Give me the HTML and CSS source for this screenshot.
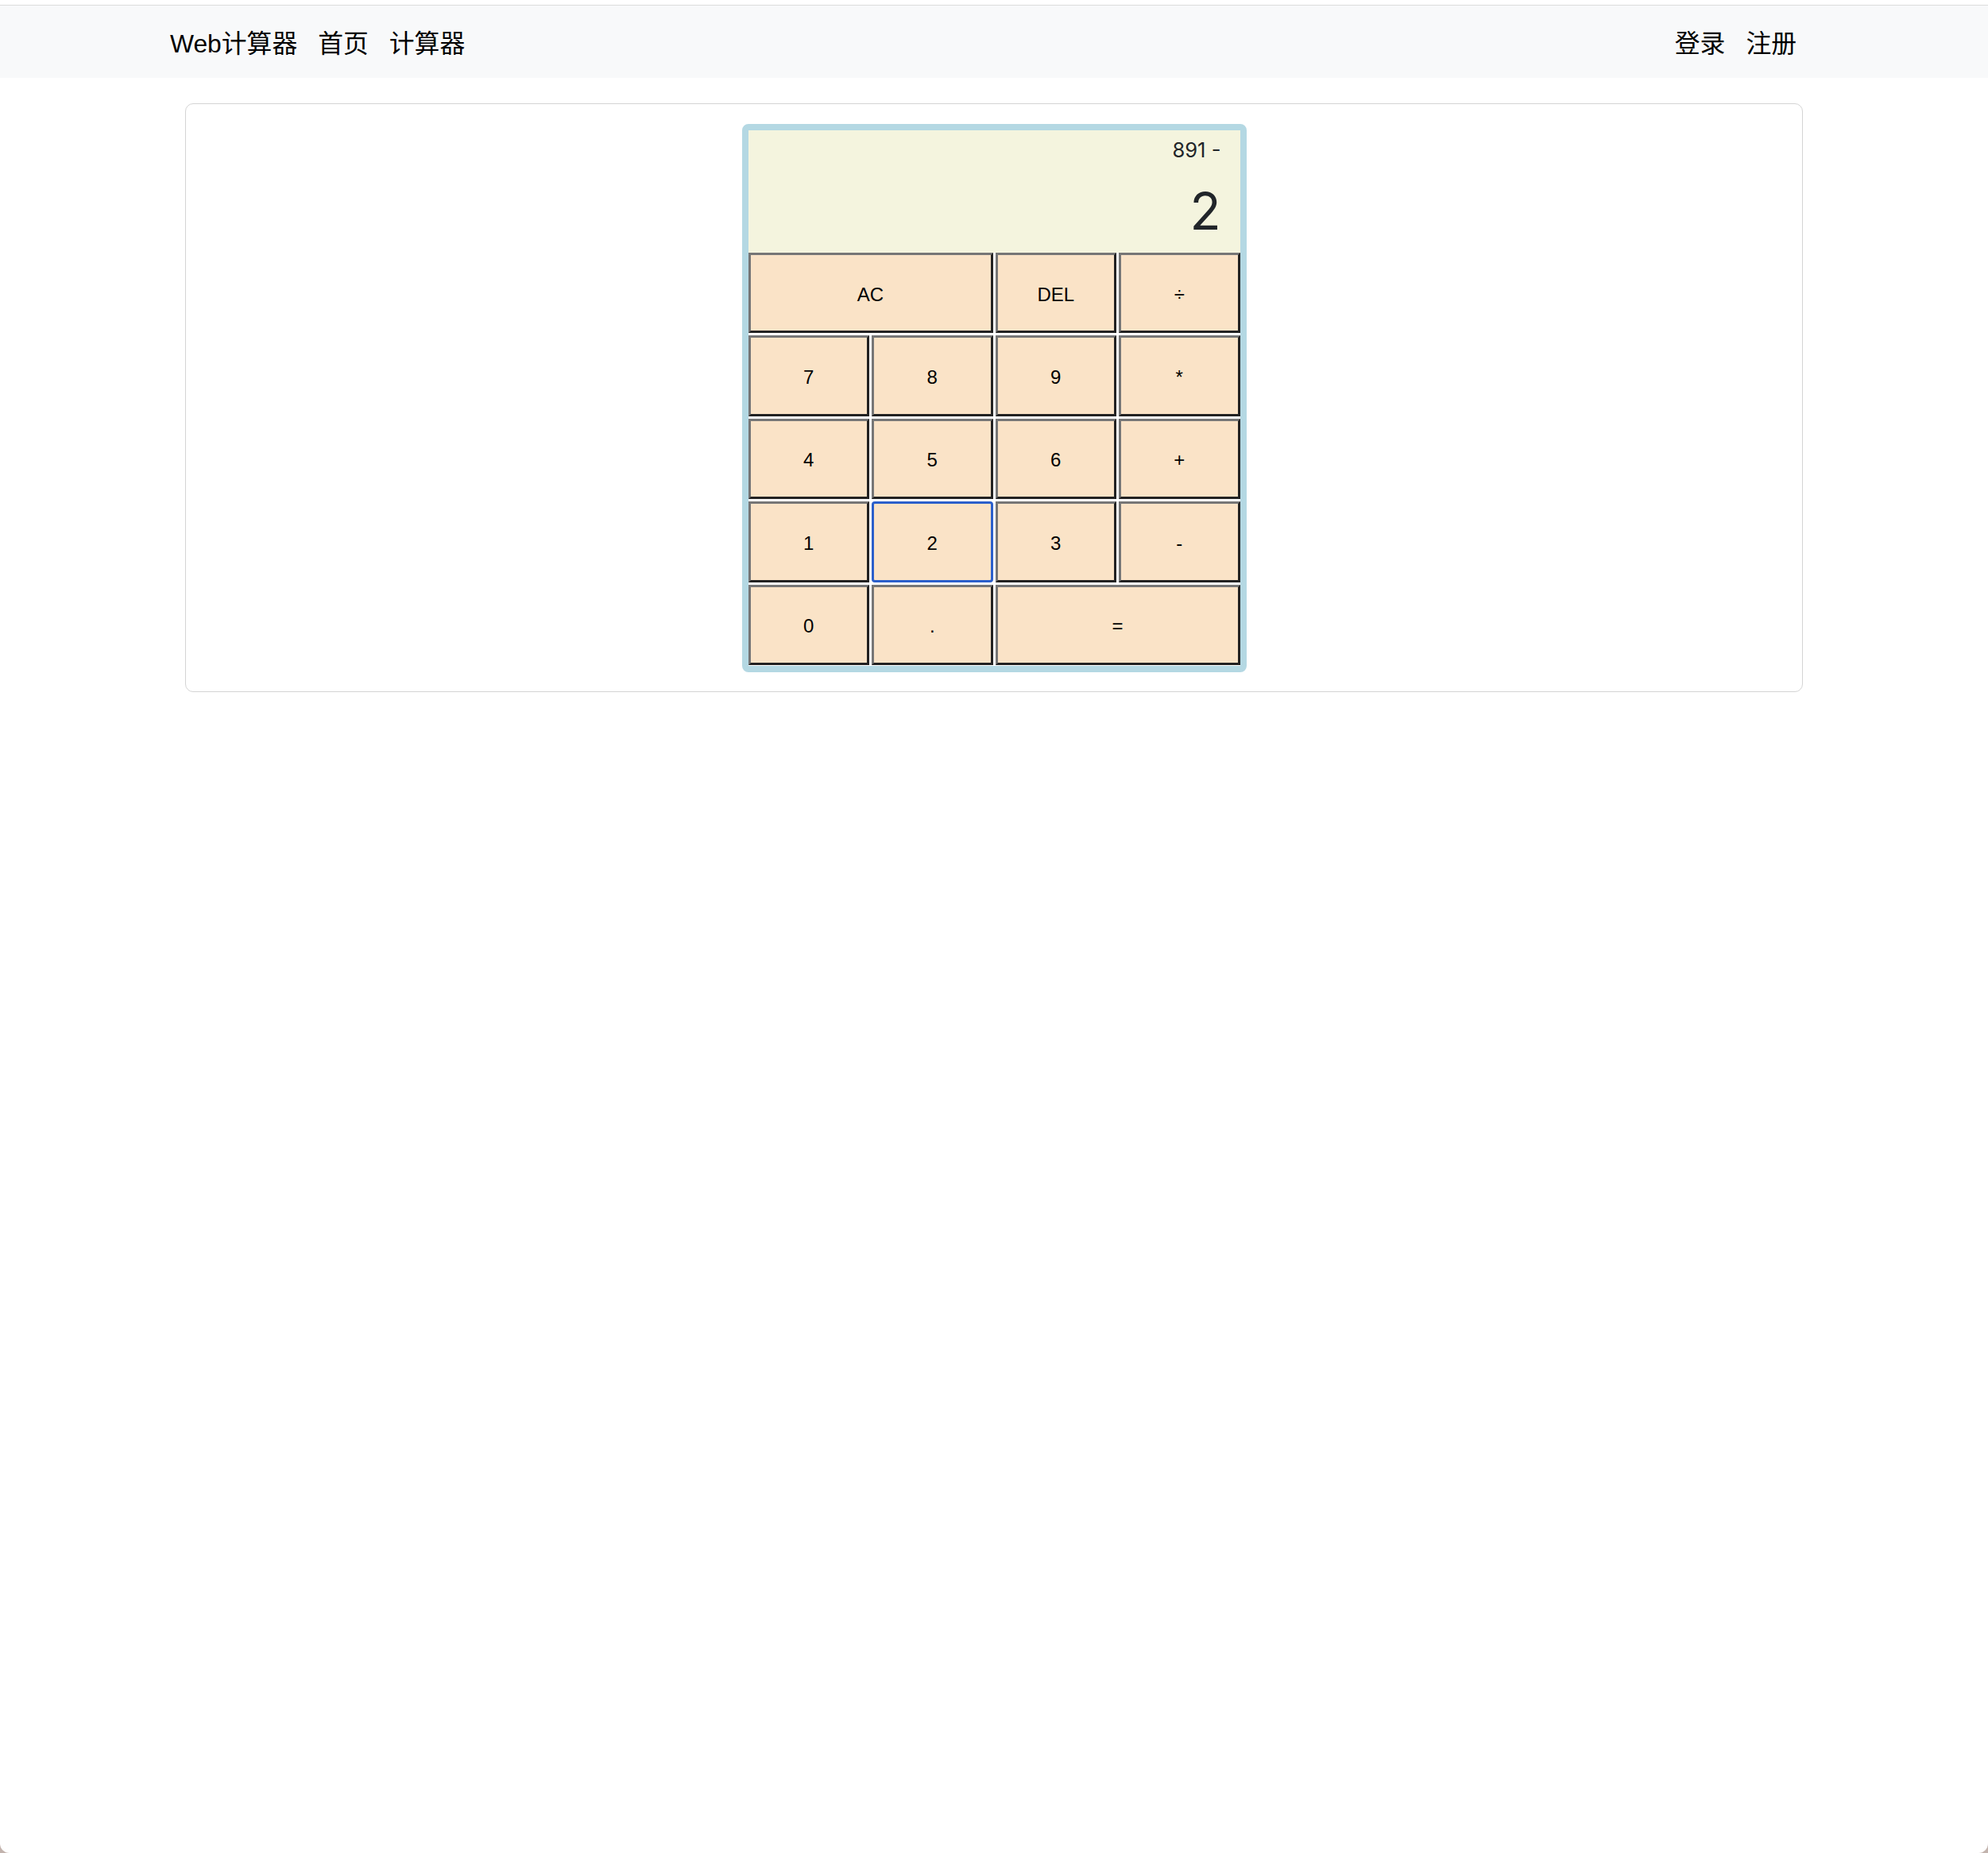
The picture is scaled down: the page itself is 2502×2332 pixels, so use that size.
FILE: index.html
```html
<!DOCTYPE html>
<html lang="zh">
<head>
<meta charset="utf-8">
<title>Web计算器</title>
<link rel="stylesheet" href="styles.css">
</head>
<body>
<div class="window">
  <header class="navbar">
    <nav class="nav-group">
      <a class="brand">Web计算器</a>
      <a class="nav-link">首页</a>
      <a class="nav-link">计算器</a>
    </nav>
    <nav class="nav-group">
      <a class="nav-link">登录</a>
      <a class="nav-link">注册</a>
    </nav>
  </header>
  <main class="main">
    <section class="card">
      <div class="calculator">
        <div class="output">
          <div class="prev">891 -</div>
          <div class="curr">2</div>
        </div>
        <div class="keys">
          <button class="key span-2">AC</button>
          <button class="key">DEL</button>
          <button class="key">÷</button>
          <button class="key">7</button>
          <button class="key">8</button>
          <button class="key">9</button>
          <button class="key">*</button>
          <button class="key">4</button>
          <button class="key">5</button>
          <button class="key">6</button>
          <button class="key">+</button>
          <button class="key">1</button>
          <button class="key focused">2</button>
          <button class="key">3</button>
          <button class="key">-</button>
          <button class="key">0</button>
          <button class="key">.</button>
          <button class="key span-2">=</button>
        </div>
      </div>
    </section>
  </main>
</div>
</body>
</html>
```
FILE: styles.css
```css
* { box-sizing: border-box; }

html {
  background: #c2b3ad;
  overflow: hidden;
}

body {
  margin: 0;
  font-family: Inter, "Noto Sans CJK SC", sans-serif;
  color: #000;
}

.window {
  height: 2332px;
  background: #fff;
  border-radius: 0 0 12px 12px;
  padding-top: 6px;
  overflow: hidden;
}

.navbar {
  height: 91.6px;
  border-top: 1px solid #dcdcdc;
  background: #f8f9fa;
  display: flex;
  align-items: center;
  justify-content: space-between;
  padding: 5px 241px 0 214px;
}

.nav-group {
  display: flex;
  align-items: center;
  gap: 26px;
}

.brand,
.nav-link {
  font-family: "Liberation Sans", "Noto Sans CJK SC", sans-serif;
  font-size: 31.8px;
  line-height: 40px;
  color: #000;
  text-decoration: none;
}

.main {
  padding: 32.4px 233px 0;
}

.card {
  border: 1px solid #d4d4d4;
  border-radius: 10px;
  padding: 25px 0 24px;
  display: flex;
  justify-content: center;
}

.calculator {
  width: 635px;
  border: 8px solid #b4d8e3;
  border-radius: 8px;
  background: #fff;
}

.output {
  height: 154px;
  background: #f4f4de;
  padding: 6px 24px 0;
  text-align: right;
  color: #212529;
}

.prev {
  font-size: 25.6px;
  line-height: 38.4px;
}

.curr {
  font-size: 64px;
  line-height: 96px;
  margin-top: 10px;
}

.keys {
  display: grid;
  grid-template-columns: repeat(4, 1fr);
  grid-auto-rows: 101.4px;
  gap: 3px;
  padding-bottom: 1px;
}

.key {
  background: #fae3c7;
  border-style: solid;
  border-width: 3px;
  border-color: #767676 #222 #222 #767676;
  font-family: "Liberation Sans", Arial, sans-serif;
  font-size: 24px;
  color: #000;
  padding: 4px 0 0;
}

.span-2 {
  grid-column: span 2;
}

.key.focused {
  border: 3px solid #2b5fcb;
  border-radius: 4px;
}
```
